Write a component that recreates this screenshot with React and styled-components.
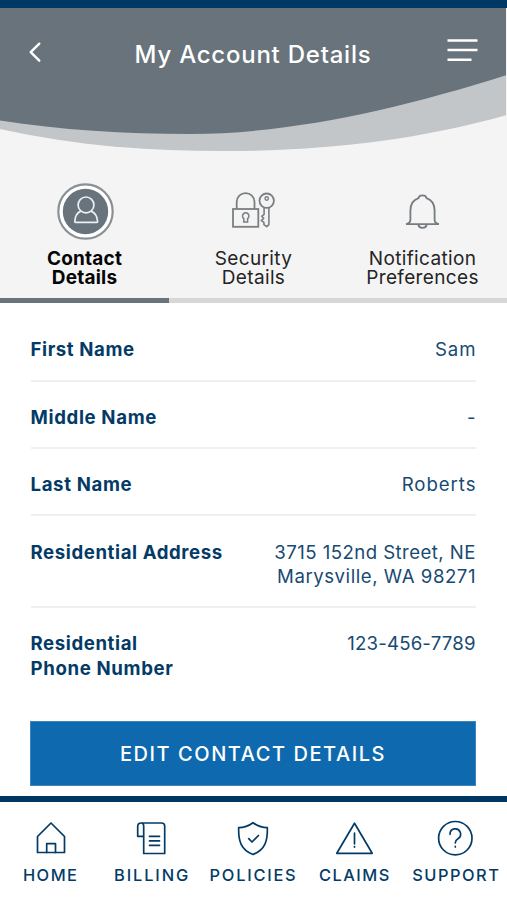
import React from "react";
import styled, { createGlobalStyle } from "styled-components";

const NAVY = "#043b66";
const SLATE = "#69737b";

const GlobalStyle = createGlobalStyle`
    * {
        box-sizing: border-box;
    }
    body {
        margin: 0;
        background: #fff;
        font-family: Inter, "Liberation Sans", sans-serif;
    }
`;

const Screen = styled.div`
    width: 507px;
    height: 900px;
    display: flex;
    flex-direction: column;
    overflow: hidden;
    background: #fff;
    color: ${NAVY};
`;

const StatusBar = styled.div`
    height: 8px;
    flex: none;
    background: #003865;
`;

const Header = styled.header`
    position: relative;
    height: 152px;
    flex: none;
    background: #f4f4f4;
`;

const Wave = styled.svg`
    position: absolute;
    top: 0;
    left: 0;
`;

const HeaderRow = styled.div`
    position: relative;
    height: 92px;
    padding: 0 29px 0 28px;
    display: flex;
    align-items: center;
    justify-content: space-between;
`;

const IconButton = styled.button`
    display: flex;
    padding: 0;
    border: 0;
    background: none;
    margin-top: ${({ $shift }) => $shift || 0}px;
`;

const Title = styled.h1`
    margin: 1px 0 0 17px;
    color: #fff;
    font-size: 24px;
    font-weight: 500;
    letter-spacing: 0.76px;
    white-space: nowrap;
`;

const Tabs = styled.nav`
    height: 143px;
    flex: none;
    display: grid;
    grid-template-columns: repeat(3, 1fr);
    background: #f4f4f4;
`;

const Tab = styled.a`
    display: flex;
    flex-direction: column;
    align-items: center;
    padding-top: 22px;
    border-bottom: 5px solid ${({ $active }) => ($active ? SLATE : "#d7d7d7")};
    color: ${({ $active }) => ($active ? "#050505" : "#242424")};
    font-size: 19px;
    font-weight: ${({ $active }) => ($active ? 700 : 400)};
    line-height: 19px;
    text-align: center;
`;

const TabLabel = styled.span`
    white-space: pre-line;
    letter-spacing: ${({ $spacing }) => $spacing}px;
`;

const TabIcon = styled.div`
    height: 58px;
    margin-bottom: 9px;
    display: flex;
    align-items: center;
`;

const Details = styled.dl`
    margin: 0;
    padding: 11.3px 31px 0 30.5px;
    flex: none;
`;

const Row = styled.div`
    display: flex;
    justify-content: space-between;
    padding: 23.2px 0 17.8px;
    border-bottom: 2px solid #eeefef;
    font-size: 18.6px;
    line-height: 24.4px;

    &:last-child {
        border-bottom: 0;
    }
`;

const Line = styled.span`
    display: block;
    white-space: nowrap;
    letter-spacing: ${({ $spacing }) => $spacing}px;
    margin-right: ${({ $spacing }) => -$spacing}px;
`;

const Label = styled.dt`
    font-weight: 700;
`;

const Value = styled.dd`
    margin: 0 0.5px 0 0;
    text-align: right;
    color: #174a73;
`;

const EditButton = styled.button`
    height: 65px;
    flex: none;
    margin: 23.2px 31px 0 30px;
    border: 1px solid #3c86c0;
    background: #0f69ae;
    color: #fff;
    font: 500 20px Inter, "Liberation Sans", sans-serif;
    letter-spacing: 1.55px;
`;

const BottomNav = styled.nav`
    flex: 1;
    margin-top: 10px;
    border-top: 6px solid #003660;
    padding-top: 16px;
    display: grid;
    grid-template-columns: repeat(5, 1fr);
`;

const NavItem = styled.a`
    display: flex;
    flex-direction: column;
    align-items: center;
    font-size: 16.4px;
    font-weight: 550;
    line-height: 20px;

    svg {
        margin-bottom: 7px;
        overflow: visible;
    }
`;

const NavLabel = styled.span`
    letter-spacing: ${({ $spacing }) => $spacing}px;
`;

const NavIcon = ({ children }) => (
    <svg
        width="40"
        height="40"
        viewBox="0 0 40 40"
        fill="none"
        stroke={NAVY}
        strokeWidth="1.7"
        strokeLinejoin="round"
        strokeLinecap="round"
    >
        {children}
    </svg>
);

const ContactIcon = () => (
    <svg width="58" height="58" viewBox="0 0 58 58" fill="none">
        <circle cx="29.5" cy="29.5" r="27.2" fill="#fff" stroke="#8a9093" strokeWidth="2.2" />
        <circle cx="29.5" cy="29.5" r="22.7" fill={SLATE} />
        <g stroke="#e9f1f7" strokeWidth="1.7" strokeLinejoin="round">
            <circle cx="30" cy="22.9" r="7.9" />
            <path d="M24.8 29.1C21.3 30.6 19 34 18.8 39.4q0 1 1 1h20.8q1 0 1-1C41.2 34 38.7 30.6 35.2 29.1" />
        </g>
    </svg>
);

const SecurityIcon = () => (
    <svg width="46" height="40" viewBox="0 0 46 40" fill="none" stroke="#7a7f82" strokeWidth="1.8">
        <rect x="2" y="18" width="25.3" height="17.8" />
        <path d="M5.7 18V11a8.9 8.9 0 0 1 17.8 0V18" />
        <path d="M12.8 31v-3.4a3.2 3.2 0 1 1 3.8 0V31z" strokeWidth="1.5" />
        <circle cx="35.7" cy="9.7" r="7.2" />
        <circle cx="35.7" cy="7.5" r="1.7" strokeWidth="1.4" />
        <path
            d="M33.1 16.7v6.6l-2.4 2 2 2-2.4 2.2 2.6 1.8v2.3l2.8 2 2.2-2V16.7"
            strokeWidth="1.6"
            strokeLinejoin="round"
        />
    </svg>
);

const BellIcon = () => (
    <svg width="36" height="38" viewBox="0 0 36 38" fill="none" stroke="#777c80" strokeWidth="1.8">
        <path
            d="M1 32.2H34M1 32.2C3.8 31.5 5.4 30.6 5.4 28V18.5C5.4 11.5 8.5 7.8 13.5 6.1C14.2 2.5 20.8 2.5 21.5 6.1C26.5 7.8 29.6 11.5 29.6 18.5V28C29.6 30.6 31.2 31.5 34 32.2"
            strokeLinejoin="round"
        />
        <path d="M13.3 32.8C14.2 37 20.8 37 21.7 32.8" />
    </svg>
);

const TABS = [
    { icon: <ContactIcon />, name: "Contact\nDetails", spacing: 0.2, active: true },
    { icon: <SecurityIcon />, name: "Security\nDetails", spacing: 0.35 },
    { icon: <BellIcon />, name: "Notification\nPreferences", spacing: 0.35 },
];

const ROWS = [
    { label: [["First Name", 0.6]], value: [["Sam", 0.9]] },
    { label: [["Middle Name", 0.65]], value: [["-", 0]] },
    { label: [["Last Name", 0.65]], value: [["Roberts", 0.95]] },
    {
        label: [["Residential Address", 0.6]],
        value: [["3715 152nd Street, NE", 0.45], ["Marysville, WA 98271", 0.55]],
    },
    {
        label: [["Residential", 0.6], ["Phone Number", 0.65]],
        value: [["123-456-7789", 0.2]],
    },
];

const NAV = [
    {
        name: "HOME",
        spacing: 1.5,
        icon: (
            <>
                <path d="M6.5 18.5 20 5l13.5 13.5v16h-27z" />
                <path d="M15.7 34.5v-8.8h8.8v8.8" />
            </>
        ),
    },
    {
        name: "BILLING",
        spacing: 1.9,
        icon: (
            <>
                <path d="M9.2 5h20.3q3.2 0 3.2 3.2v27.3H11.7V8.2Q11.7 5 9.2 5 5.7 5 5.7 8.5v9.8h6" />
                <path d="M17.5 18.3h10M17.5 22.9h10M17.5 27.3h10" />
            </>
        ),
    },
    {
        name: "POLICIES",
        spacing: 1.75,
        icon: (
            <>
                <path d="M20 4.7C15 8.4 10.5 9.6 5.7 9.7 5.2 22.5 7.7 31.5 20 36.5 32.3 31.5 34.8 22.5 34.3 9.7 29.5 9.6 25 8.4 20 4.7z" />
                <path d="m15.7 20.7 3.3 3.3 6.5-6.5" />
            </>
        ),
    },
    {
        name: "CLAIMS",
        spacing: 1.45,
        icon: (
            <>
                <path d="M19.5 5.2 37.2 35.3H1.8z" />
                <path d="M19.5 15.2v10.6M19.5 28.5v.6" />
            </>
        ),
    },
    {
        name: "SUPPORT",
        spacing: 1.5,
        icon: (
            <>
                <circle cx="19.3" cy="20.2" r="16.7" />
                <path d="M14 16.3a5.3 5.3 0 1 1 8 4.4c-2 1.2-2.7 1.9-2.7 4.1M19.3 28.4v.5" />
            </>
        ),
    },
];

const App = () => {
    return (
        <>
            <GlobalStyle />
            <Screen>
                <StatusBar />
                <Header>
                    <Wave width="506" height="144" viewBox="0 8 506 144">
                        <path
                            fill="#c2c6c9"
                            d="M0 8V129C75 146 150 151 225 151C320 151 415 141 507 115V8z"
                        />
                        <path
                            fill={SLATE}
                            d="M0 8V120.5C60 130 125 134 190 134C290 134 400 109 507 75V8z"
                        />
                    </Wave>
                    <HeaderRow>
                        <IconButton aria-label="Back" $shift={-4}>
                            <svg width="14" height="22" viewBox="0 0 14 22" fill="none">
                                <path
                                    d="M11.3 2.7 2.7 11.2l8.6 8.5"
                                    stroke="#fff"
                                    strokeWidth="2.4"
                                    strokeLinecap="round"
                                    strokeLinejoin="round"
                                />
                            </svg>
                        </IconButton>
                        <Title>My Account Details</Title>
                        <IconButton aria-label="Menu" $shift={-8}>
                            <svg width="31" height="24" viewBox="0 0 31 24">
                                <path
                                    d="M.5 2.5h30M.5 12h30M.5 21.7h24"
                                    stroke="#fff"
                                    strokeWidth="2.6"
                                />
                            </svg>
                        </IconButton>
                    </HeaderRow>
                </Header>
                <Tabs>
                    {TABS.map(({ icon, name, spacing, active }) => (
                        <Tab key={name} $active={active}>
                            <TabIcon>{icon}</TabIcon>
                            <TabLabel $spacing={spacing}>{name}</TabLabel>
                        </Tab>
                    ))}
                </Tabs>
                <Details>
                    {ROWS.map(({ label, value }) => (
                        <Row key={label[0][0]}>
                            <Label>
                                {label.map(([text, spacing]) => (
                                    <Line key={text} $spacing={spacing}>
                                        {text}
                                    </Line>
                                ))}
                            </Label>
                            <Value>
                                {value.map(([text, spacing]) => (
                                    <Line key={text} $spacing={spacing}>
                                        {text}
                                    </Line>
                                ))}
                            </Value>
                        </Row>
                    ))}
                </Details>
                <EditButton>EDIT CONTACT DETAILS</EditButton>
                <BottomNav>
                    {NAV.map(({ name, spacing, icon }) => (
                        <NavItem key={name}>
                            <NavIcon>{icon}</NavIcon>
                            <NavLabel $spacing={spacing}>{name}</NavLabel>
                        </NavItem>
                    ))}
                </BottomNav>
            </Screen>
        </>
    );
};

export default App;
